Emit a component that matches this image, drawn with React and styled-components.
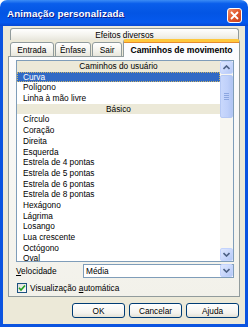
import styled, { createGlobalStyle } from 'styled-components';

const GlobalStyle = createGlobalStyle`
  body {
    margin: 0;
    background: #ffffff;
    font-family: "Liberation Sans", Arial, sans-serif;
  }
`;

const userPaths = ['Curva', 'Polígono', 'Linha à mão livre'];
const basicPaths = [
  'Círculo',
  'Coração',
  'Direita',
  'Esquerda',
  'Estrela de 4 pontas',
  'Estrela de 5 pontas',
  'Estrela de 6 pontas',
  'Estrela de 8 pontas',
  'Hexágono',
  'Lágrima',
  'Losango',
  'Lua crescente',
  'Octógono',
  'Oval',
];

const Chevron = ({ up }) => (
  <svg width="7" height="5" viewBox="0 0 7 5">
    <path
      d={up ? 'M0.5 4 L3.5 1 L6.5 4' : 'M0.5 1 L3.5 4 L6.5 1'}
      fill="none"
      stroke="#4d6185"
      strokeWidth="1.6"
    />
  </svg>
);

const App = () => {
  return (
    <>
      <GlobalStyle />
      <Window>
        <TitleBar>
          <Title>Animação personalizada</Title>
          <CloseButton>
            <svg width="9" height="9" viewBox="0 0 9 9">
              <path d="M1 1 L8 8 M8 1 L1 8" stroke="#fff" strokeWidth="1.8" />
            </svg>
          </CloseButton>
        </TitleBar>
        <Frame>
          <TopTabs>
            <Tab $width={229} $top>Efeitos diversos</Tab>
          </TopTabs>
          <BottomTabs>
            <Tab $width={44}>Entrada</Tab>
            <Tab $width={37}>Ênfase</Tab>
            <Tab $width={30}>Sair</Tab>
            <ActiveTab>Caminhos de movimento</ActiveTab>
          </BottomTabs>
          <Panel>
            <ListBox>
              <Rows>
                <GroupHeader>Caminhos do usuário</GroupHeader>
                {userPaths.map((p, i) => (
                  <Row key={p} $selected={i === 0}>
                    {p}
                  </Row>
                ))}
                <GroupHeader>Básico</GroupHeader>
                {basicPaths.map((p) => (
                  <Row key={p}>{p}</Row>
                ))}
              </Rows>
              <ScrollBar>
                <ScrollButton>
                  <Chevron up />
                </ScrollButton>
                <Thumb>
                  <Grip />
                  <Grip />
                  <Grip />
                  <Grip />
                </Thumb>
                <Track />
                <ScrollButton>
                  <Chevron />
                </ScrollButton>
              </ScrollBar>
            </ListBox>
            <SpeedRow>
              <Label>
                <u>V</u>elocidade
              </Label>
              <Combo>
                <ComboText>Média</ComboText>
                <ScrollButton>
                  <Chevron />
                </ScrollButton>
              </Combo>
            </SpeedRow>
            <CheckRow>
              <CheckBox>
                <svg width="8" height="8" viewBox="0 0 8 8">
                  <path d="M1 3.8 L3 6 L7 1.5" fill="none" stroke="#21a121" strokeWidth="1.6" />
                </svg>
              </CheckBox>
              <Label>
                Visualização <u>a</u>utomática
              </Label>
            </CheckRow>
          </Panel>
          <ButtonRow>
            <Button>OK</Button>
            <Button>Cancelar</Button>
            <Button>
              A<u>j</u>uda
            </Button>
          </ButtonRow>
        </Frame>
      </Window>
    </>
  );
};

const Window = styled.div`
  width: 248px;
  height: 327px;
  display: flex;
  flex-direction: column;
`;

const TitleBar = styled.div`
  height: 26px;
  flex: none;
  display: flex;
  align-items: center;
  justify-content: space-between;
  padding: 0 6px 0 7px;
  box-sizing: border-box;
  border-radius: 7px 7px 0 0;
  background: linear-gradient(
    180deg,
    #3b8cf5 0%,
    #0a5eeb 14%,
    #0355e4 50%,
    #0559ee 86%,
    #0648d4 100%
  );
`;

const Title = styled.span`
  color: #ffffff;
  font-weight: bold;
  font-size: 9.8px;
  text-shadow: 1px 1px 0 #0f1a89;
  letter-spacing: 0.1px;
`;

const CloseButton = styled.div`
  width: 15px;
  height: 15px;
  box-sizing: border-box;
  border: 1px solid #ffffff;
  border-radius: 3px;
  background: linear-gradient(135deg, #f0926b 0%, #e35a2f 45%, #c7401c 100%);
  display: flex;
  align-items: center;
  justify-content: center;
  margin-top: 4px;
`;

const Frame = styled.div`
  flex: 1;
  display: flex;
  flex-direction: column;
  background: #ece9d8;
  border: 3px solid #0b54e0;
  border-top: none;
  padding: 2px 5px 0 5px;
`;

const TopTabs = styled.div`
  display: flex;
  padding-left: 2px;
  height: 12px;
`;

const BottomTabs = styled.div`
  display: flex;
  align-items: flex-end;
  padding-left: 2px;
  height: 17px;
  position: relative;
  z-index: 1;
  margin-bottom: -1px;
`;

const Tab = styled.div`
  width: ${(p) => p.$width}px;
  height: ${(p) => (p.$top ? '12px' : '15px')};
  box-sizing: border-box;
  margin-right: 1px;
  border: 1px solid #919b9c;
  border-bottom: ${(p) => (p.$top ? 'none' : '1px solid #919b9c')};
  border-radius: 3px 3px 0 0;
  background: linear-gradient(180deg, #ffffff 0%, #f3f2ec 60%, #e8e6dc 100%);
  font-size: 8.3px;
  color: #000;
  display: flex;
  align-items: center;
  justify-content: center;
  white-space: nowrap;
`;

const ActiveTab = styled.div`
  width: 118px;
  height: 18px;
  box-sizing: border-box;
  border: 1px solid #919b9c;
  border-top: 3px solid #ffc83c;
  border-bottom: none;
  border-radius: 3px 3px 0 0;
  background: #fcfcfe;
  box-shadow: inset 0 1px 0 #e68b2c;
  font-size: 8.6px;
  font-weight: bold;
  display: flex;
  align-items: center;
  justify-content: center;
  white-space: nowrap;
`;

const Panel = styled.div`
  height: 241px;
  box-sizing: border-box;
  border: 1px solid #919b9c;
  background: linear-gradient(180deg, #fcfcfe 0%, #f6f5f0 60%, #f2f1ea 100%);
  padding: 3px 5px 3px 7px;
  display: flex;
  flex-direction: column;
`;

const ListBox = styled.div`
  height: 202px;
  box-sizing: border-box;
  border: 1px solid #7f9db9;
  background: #ffffff;
  display: flex;
  overflow: hidden;
`;

const Rows = styled.div`
  flex: 1;
  overflow: hidden;
`;

const Row = styled.div`
  height: 10.7px;
  line-height: 10.7px;
  padding-left: 6px;
  font-size: 8.3px;
  white-space: nowrap;
  color: ${(p) => (p.$selected ? '#ffffff' : '#000000')};
  background: ${(p) => (p.$selected ? '#316ac5' : 'transparent')};
  outline: ${(p) => (p.$selected ? '1px dotted #c9b36b' : 'none')};
  outline-offset: -1px;
`;

const GroupHeader = styled(Row)`
  padding-left: 0;
  text-align: center;
  background: #ece9d8;
`;

const ScrollBar = styled.div`
  width: 13px;
  display: flex;
  flex-direction: column;
  background: #f7f6f1;
`;

const ScrollButton = styled.div`
  width: 13px;
  height: 13px;
  flex: none;
  box-sizing: border-box;
  border: 1px solid #c3d3fd;
  border-radius: 2px;
  background: linear-gradient(135deg, #dfe8fe 0%, #c6d5fb 60%, #b3c7f5 100%);
  display: flex;
  align-items: center;
  justify-content: center;
`;

const Thumb = styled.div`
  height: 43px;
  margin-top: 1px;
  box-sizing: border-box;
  border: 1px solid #b5c8f4;
  border-radius: 2px;
  background: linear-gradient(90deg, #c9d8fc 0%, #bfd0fa 60%, #b1c5f3 100%);
  display: flex;
  flex-direction: column;
  align-items: center;
  justify-content: center;
  gap: 1px;
`;

const Grip = styled.div`
  width: 5px;
  height: 1px;
  background: #8ca6e0;
`;

const Track = styled.div`
  flex: 1;
`;

const SpeedRow = styled.div`
  display: flex;
  align-items: center;
  margin-top: 2px;
  height: 13px;
`;

const Label = styled.span`
  font-size: 8.3px;
  color: #000;
  white-space: nowrap;
`;

const Combo = styled.div`
  margin-left: auto;
  width: 151px;
  height: 14px;
  box-sizing: border-box;
  border: 1px solid #7f9db9;
  background: #ffffff;
  display: flex;
  align-items: center;
  padding-right: 0;
`;

const ComboText = styled.span`
  flex: 1;
  font-size: 8.3px;
  padding-left: 2px;
`;

const CheckRow = styled.div`
  display: flex;
  align-items: center;
  gap: 3px;
  margin-top: 6px;
  height: 10px;
  padding-left: 1px;
`;

const CheckBox = styled.div`
  width: 10px;
  height: 10px;
  box-sizing: border-box;
  border: 1px solid #1c5180;
  background: linear-gradient(135deg, #dcdcd7 0%, #ffffff 100%);
  display: flex;
  align-items: center;
  justify-content: center;
`;

const ButtonRow = styled.div`
  display: flex;
  justify-content: flex-end;
  gap: 4px;
  margin-top: 6px;
  padding-right: 1px;
`;

const Button = styled.div`
  width: 53px;
  height: 15px;
  box-sizing: border-box;
  border: 1px solid #003c74;
  border-radius: 3px;
  background: linear-gradient(180deg, #ffffff 0%, #f4f3ee 70%, #e3e1d6 100%);
  font-size: 8.3px;
  color: #000;
  display: flex;
  align-items: center;
  justify-content: center;
`;

export default App;
